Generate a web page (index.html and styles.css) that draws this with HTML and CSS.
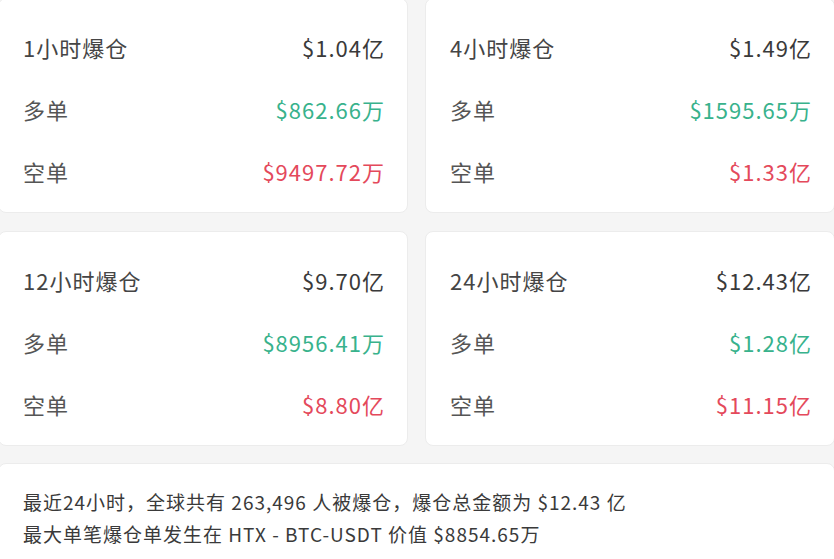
FILE: index.html
```html
<!DOCTYPE html>
<html lang="zh-CN">
<head>
<meta charset="utf-8">
<link rel="stylesheet" href="styles.css">
</head>
<body>
<div class="page">
  <div class="grid">
    <div class="card">
      <div class="row"><span class="title">1小时爆仓</span><span class="total">$1.04亿</span></div>
      <div class="row"><span class="label">多单</span><span class="val up">$862.66万</span></div>
      <div class="row"><span class="label">空单</span><span class="val down">$9497.72万</span></div>
    </div>
    <div class="card">
      <div class="row"><span class="title">4小时爆仓</span><span class="total">$1.49亿</span></div>
      <div class="row"><span class="label">多单</span><span class="val up">$1595.65万</span></div>
      <div class="row"><span class="label">空单</span><span class="val down">$1.33亿</span></div>
    </div>
    <div class="card">
      <div class="row"><span class="title">12小时爆仓</span><span class="total">$9.70亿</span></div>
      <div class="row"><span class="label">多单</span><span class="val up">$8956.41万</span></div>
      <div class="row"><span class="label">空单</span><span class="val down">$8.80亿</span></div>
    </div>
    <div class="card">
      <div class="row"><span class="title">24小时爆仓</span><span class="total">$12.43亿</span></div>
      <div class="row"><span class="label">多单</span><span class="val up">$1.28亿</span></div>
      <div class="row"><span class="label">空单</span><span class="val down">$11.15亿</span></div>
    </div>
  </div>
  <div class="summary">
    <p>最近24小时，全球共有 263,496 人被爆仓，爆仓总金额为 $12.43 亿</p>
    <p>最大单笔爆仓单发生在 HTX - BTC-USDT 价值 $8854.65万</p>
  </div>
</div>
</body>
</html>
```

FILE: styles.css
```css
html, body {
  margin: 0;
  padding: 0;
  background: #f5f5f5;
  overflow: hidden;
}
body {
  font-family: "Noto Sans CJK SC", "Noto Sans", sans-serif;
  color: #333;
}
.page {
  margin: -2px 0 0 -2px;
  width: 837px;
}
.grid {
  display: grid;
  grid-template-columns: 410px 410px;
  column-gap: 17px;
  row-gap: 18px;
}
.card {
  background: #fff;
  border: 1px solid #ececec;
  border-radius: 8px;
  height: 215px;
  box-sizing: border-box;
  padding: 17px 22px 0 24px;
}
.row {
  height: 62px;
  display: flex;
  align-items: center;
  justify-content: space-between;
  font-size: 22px;
  letter-spacing: 1px;
}
.title {
  color: #454545;
}
.label {
  color: #555;
}
.total {
  color: #3a3a3a;
}
.up {
  color: #38b28c;
}
.down {
  color: #e4495b;
}
.summary {
  margin-top: 17px;
  background: #fff;
  border: 1px solid #ececec;
  border-radius: 8px;
  height: 140px;
  box-sizing: border-box;
  padding: 22px 24px 0 24px;
}
.summary p {
  margin: 0;
  font-size: 19px;
  letter-spacing: 1px;
  line-height: 32px;
  color: #3a3a3a;
  white-space: nowrap;
}
```
